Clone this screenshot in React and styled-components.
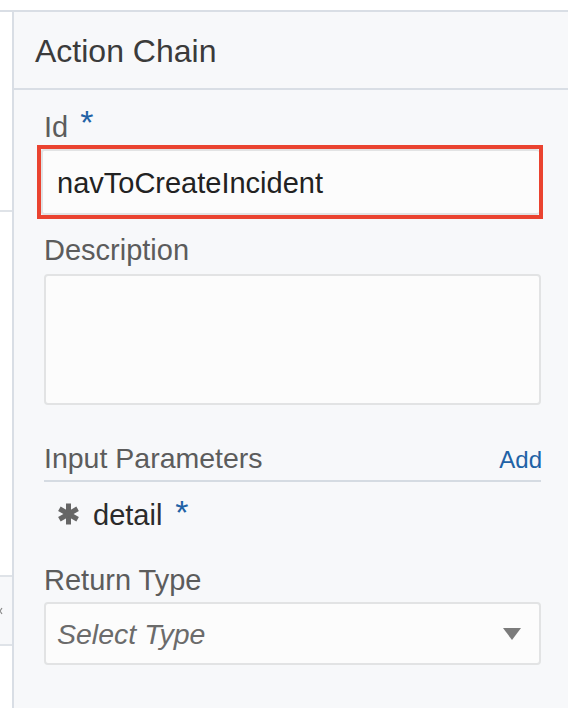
import styled, { createGlobalStyle } from "styled-components";

const GlobalStyle = createGlobalStyle`
  * { box-sizing: border-box; }
  body {
    margin: 0;
    background: #ffffff;
    font-family: "Liberation Sans", Arial, sans-serif;
  }
`;

const Page = styled.div`
  width: 568px;
  height: 708px;
  padding-top: 10px;
  background: #ffffff;
  overflow: hidden;
`;

const Frame = styled.div`
  display: flex;
  height: 698px;
  border-top: 2px solid #d9dee5;
`;

const Strip = styled.div`
  width: 12px;
  display: flex;
  flex-direction: column;
`;

const StripCell = styled.div`
  height: ${(p) => p.h}px;
  flex: ${(p) => (p.grow ? 1 : "none")};
  background: ${(p) => (p.shade ? "#f7f8fa" : "#ffffff")};
  border-bottom: ${(p) => (p.line ? "2px solid #dfe3e8" : "none")};
  display: flex;
  align-items: center;
`;

const Panel = styled.div`
  flex: 1;
  display: flex;
  flex-direction: column;
  background: #f7f8fa;
  border-left: 2px solid #d9dee5;
`;

const Header = styled.div`
  height: 78px;
  display: flex;
  align-items: center;
  padding: 2px 0 0 21px;
  border-bottom: 2px solid #d9dee5;
  font-size: 32px;
  color: #3b3b3b;
`;

const Body = styled.div`
  padding: 20px 27px 0 30px;
  display: flex;
  flex-direction: column;
`;

const Label = styled.div`
  height: 34px;
  font-size: 29px;
  line-height: 34px;
  color: #5c5c5c;
  margin-top: ${(p) => p.top || 0}px;
  margin-bottom: ${(p) => p.bottom || 0}px;
`;

const Req = styled.span`
  color: #2162a6;
  font-size: 34px;
  line-height: 0;
  margin-left: 12px;
  position: relative;
  top: -3px;
`;

const Highlight = styled.div`
  margin-left: -7px;
  margin-right: -2px;
  border: 4px solid #ea4330;
`;

const TextInput = styled.input`
  display: block;
  width: 100%;
  height: 66px;
  border: 2px solid #e2e3e4;
  border-right: none;
  border-radius: 3px;
  background: #fcfcfc;
  padding: 3px 0 0 14px;
  font-family: "Liberation Sans", Arial, sans-serif;
  font-size: 29px;
  color: #222222;
  outline: none;
`;

const TextArea = styled.div`
  height: 131px;
  border: 2px solid #e2e3e4;
  border-radius: 4px;
  background: #fcfcfc;
`;

const SectionRow = styled.div`
  display: flex;
  justify-content: space-between;
  align-items: baseline;
  margin-top: 36px;
  padding-bottom: 5px;
  border-bottom: 2px solid #d5dbe2;
`;

const SectionTitle = styled.span`
  font-size: 28.5px;
  line-height: 34px;
  color: #5c5c5c;
`;

const AddLink = styled.a`
  font-size: 24px;
  color: #2162a6;
  text-decoration: none;
  margin-right: -1px;
`;

const ParamRow = styled.div`
  display: flex;
  align-items: flex-start;
  padding: 16px 0 0 13px;
  height: 81px;
`;

const ParamName = styled.span`
  font-size: 29px;
  line-height: 34px;
  color: #2b2b2b;
  margin-left: 13px;
`;

const ParamReq = styled.span`
  color: #2162a6;
  font-size: 34px;
  line-height: 34px;
  margin-left: 13px;
  position: relative;
  top: -3px;
`;

const Select = styled.div`
  height: 63px;
  display: flex;
  align-items: center;
  justify-content: space-between;
  border: 2px solid #e2e3e4;
  border-radius: 4px;
  background: #fcfcfc;
  padding: 1px 18px 0 11px;
  font-size: 28.5px;
  font-style: italic;
  color: #6b6b6b;
`;

const Star = () => (
  <svg width="23" height="22" viewBox="0 0 23 22" style={{ marginTop: 5 }}>
    <g stroke="#666666" strokeWidth="5" strokeLinecap="butt">
      <line x1="11.5" y1="0.5" x2="11.5" y2="21.5" />
      <line x1="2.4" y1="5.75" x2="20.6" y2="16.25" />
      <line x1="2.4" y1="16.25" x2="20.6" y2="5.75" />
    </g>
  </svg>
);

const Caret = () => (
  <svg width="18" height="12" viewBox="0 0 18 12">
    <path d="M0 0 L18 0 L9 12 Z" fill="#7b7b7b" />
  </svg>
);

const Chevron = () => (
  <svg width="3" height="8" viewBox="0 0 3 8">
    <path d="M2 1 L0 4 L2 7" stroke="#888888" strokeWidth="1.2" fill="none" />
  </svg>
);

export default function App() {
  return (
    <Page>
      <GlobalStyle />
      <Frame>
        <Strip>
          <StripCell h={200} line />
          <StripCell h={365} line />
          <StripCell h={69} line shade>
            <Chevron />
          </StripCell>
          <StripCell grow />
        </Strip>
        <Panel>
          <Header>Action Chain</Header>
          <Body>
            <Label bottom={1}>
              Id<Req>*</Req>
            </Label>
            <Highlight>
              <TextInput readOnly defaultValue="navToCreateIncident" />
            </Highlight>
            <Label top={14} bottom={7}>Description</Label>
            <TextArea />
            <SectionRow>
              <SectionTitle>Input Parameters</SectionTitle>
              <AddLink href="#">Add</AddLink>
            </SectionRow>
            <ParamRow>
              <Star />
              <ParamName>detail</ParamName>
              <ParamReq>*</ParamReq>
            </ParamRow>
            <Label bottom={5}>Return Type</Label>
            <Select>
              <span>Select Type</span>
              <Caret />
            </Select>
          </Body>
        </Panel>
      </Frame>
    </Page>
  );
}
